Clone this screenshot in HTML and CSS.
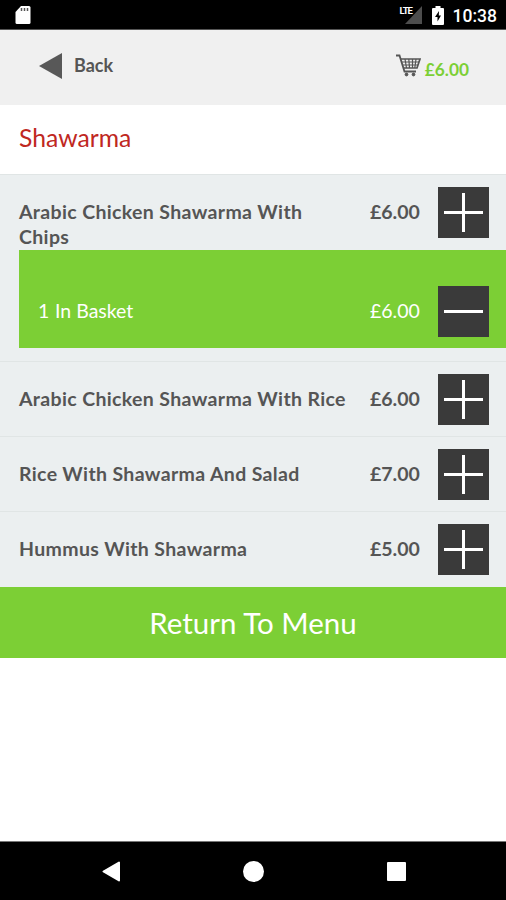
FILE: index.html
```html
<!DOCTYPE html>
<html lang="en">
<head>
  <meta charset="UTF-8">
  <meta name="viewport" content="width=device-width, initial-scale=1.0">
  <title>Shawarma</title>
  <link rel="stylesheet" href="styles.css">
</head>
<body>
  <div class="status-bar">
    <svg class="sd-card" width="16" height="20" viewBox="0 0 16 20">
      <path d="M6 1h8q1.500 0 1.500 1.500v15q0 1.500-1.500 1.500H2q-1.500 0-1.500-1.500V7z" fill="#fff"/>
      <path d="M6.500 3v3M9.500 3v3M12.500 3v3" stroke="#555" stroke-width="1.500"/>
    </svg>
    <div class="status-icons">
      <span class="lte">LTE</span>
      <svg class="signal" width="17" height="18" viewBox="0 0 17 18">
        <path d="M17 0v18H0z" fill="#4d4d4d"/>
      </svg>
      <svg class="battery" width="12" height="19" viewBox="0 0 12 19">
        <path d="M3.500 0h5v2H11q1 0 1 1v15q0 1-1 1H1q-1 0-1-1V3q0-1 1-1h2.500z" fill="#fff"/>
        <path d="M7 5L3 11h2.500v4.500L9 9.500H6.800z" fill="#000"/>
      </svg>
      <span class="time">10:38</span>
    </div>
  </div>

  <div class="header">
    <a class="back">
      <svg width="23" height="26" viewBox="0 0 23 26">
        <path d="M0 13L23 0v26z" fill="#585858"/>
      </svg>
      <span>Back</span>
    </a>
    <div class="cart">
      <svg width="26" height="24" viewBox="0 0 26 24" fill="none" stroke="#555">
        <path d="M1 1.500h3.500l5 16H21" stroke-width="1.800"/>
        <path d="M5.500 5H25l-3 9H8.500" stroke-width="1.700"/>
        <path d="M7 8h17M8 11h15M10 5l1.500 9M13.800 5l.7 9M17.500 5v9M21 5l-1.200 9" stroke-width="1.200"/>
        <circle cx="11.500" cy="20.500" r="1.400" fill="#555"/>
        <circle cx="18.500" cy="20.500" r="1.400" fill="#555"/>
      </svg>
      <span>£6.00</span>
    </div>
  </div>

  <h1>Shawarma</h1>

  <div class="menu">
    <div class="item has-basket">
      <div class="row">
        <span class="name">Arabic Chicken Shawarma With Chips</span>
        <span class="price">£6.00</span>
        <button class="plus"></button>
      </div>
      <div class="basket">
        <span class="name"><span class="count">1</span>In Basket</span>
        <span class="price">£6.00</span>
        <button class="minus"></button>
      </div>
    </div>
    <div class="item">
      <div class="row">
        <span class="name">Arabic Chicken Shawarma With Rice</span>
        <span class="price">£6.00</span>
        <button class="plus"></button>
      </div>
    </div>
    <div class="item">
      <div class="row">
        <span class="name">Rice With Shawarma And Salad</span>
        <span class="price">£7.00</span>
        <button class="plus"></button>
      </div>
    </div>
    <div class="item">
      <div class="row">
        <span class="name">Hummus With Shawarma</span>
        <span class="price">£5.00</span>
        <button class="plus"></button>
      </div>
    </div>
  </div>

  <a class="return">Return To Menu</a>

  <div class="nav-bar">
    <svg width="18" height="21" viewBox="0 0 18 21">
      <path d="M17 1.500v18L1.500 10.500z" fill="#fff" stroke="#fff" stroke-width="2" stroke-linejoin="round"/>
    </svg>
    <div class="home"></div>
    <div class="recent"></div>
  </div>
</body>
</html>
```

FILE: styles.css
```css
* {
  margin: 0;
  padding: 0;
  box-sizing: border-box;
}

body {
  display: flex;
  flex-direction: column;
  height: 900px;
  background-color: #fff;
  color: #555;
  font-family: Lato, sans-serif;
}

.status-bar {
  display: flex;
  justify-content: space-between;
  height: 30px;
  padding: 5px 9px 0 15px;
  background-color: #000;
  border-bottom: 1px solid #555;
  color: #fff;
  font-family: Roboto, sans-serif;
}

.status-icons {
  display: flex;
}

.lte {
  width: 5px;
  font-size: 9.5px;
  font-weight: bold;
  line-height: 11px;
  letter-spacing: -1px;
}

.signal {
  margin-top: 1px;
}

.battery {
  margin: 1px 9px 0 10px;
}

.time {
  font-size: 17.5px;
  font-weight: 500;
  line-height: 22px;
}

.header {
  display: flex;
  justify-content: space-between;
  height: 75px;
  padding: 0 37px 0 39px;
  background-color: #f0f0f0;
}

.back {
  display: flex;
  align-items: center;
  gap: 12px;
  height: 71px;
  font-size: 18px;
  font-weight: bold;
}

.back span {
  padding-bottom: 2px;
}

.cart {
  display: flex;
  align-items: center;
  gap: 4px;
  height: 72px;
  color: #7ccf35;
  font-size: 17.3px;
  font-weight: bold;
}

.cart span {
  padding-top: 7px;
}

h1 {
  height: 69px;
  padding-left: 19px;
  color: #c0281f;
  font-size: 24.7px;
  font-weight: normal;
  line-height: 66px;
}

.item {
  height: 75px;
  padding-top: 12px;
  background-color: #ebeff0;
  border-top: 1px solid #e0e5e5;
}

.item.has-basket {
  height: 187px;
}

.item:last-child {
  height: 76px;
}

.row, .basket {
  display: flex;
  align-items: flex-start;
  padding-right: 17px;
  font-size: 19.5px;
  line-height: 25px;
}

.row {
  height: 63px;
  padding-left: 19px;
  font-weight: bold;
}

.basket {
  height: 98px;
  margin-left: 19px;
  padding-top: 36px;
  padding-left: 19px;
  background-color: #7ccf35;
  color: #fff;
}

.name {
  flex: 1;
  padding-top: 12px;
}

.count {
  display: inline-block;
  width: 17px;
}

.price {
  width: 68px;
  padding-top: 12px;
}

.row .name {
  padding-right: 20px;
  letter-spacing: 0.35px;
}

button {
  width: 51px;
  height: 51px;
  border: none;
  background: linear-gradient(#fff, #fff) center / 39px 3px no-repeat #3a3a3a;
}

button.plus {
  background: linear-gradient(#fff, #fff) center / 39px 3px no-repeat, linear-gradient(#fff, #fff) center / 3px 39px no-repeat #3a3a3a;
}

.return {
  height: 71px;
  background-color: #7ccf35;
  color: #fff;
  font-size: 29.5px;
  line-height: 72px;
  text-align: center;
}

.nav-bar {
  display: flex;
  justify-content: space-between;
  align-items: center;
  height: 59px;
  margin-top: auto;
  padding: 0 100px 0 102px;
  background-color: #000;
  border-top: 1px solid #777;
}

.home {
  width: 21px;
  height: 21px;
  border-radius: 50%;
  background-color: #fff;
}

.recent {
  width: 19px;
  height: 19px;
  border-radius: 1px;
  background-color: #fff;
}
```
